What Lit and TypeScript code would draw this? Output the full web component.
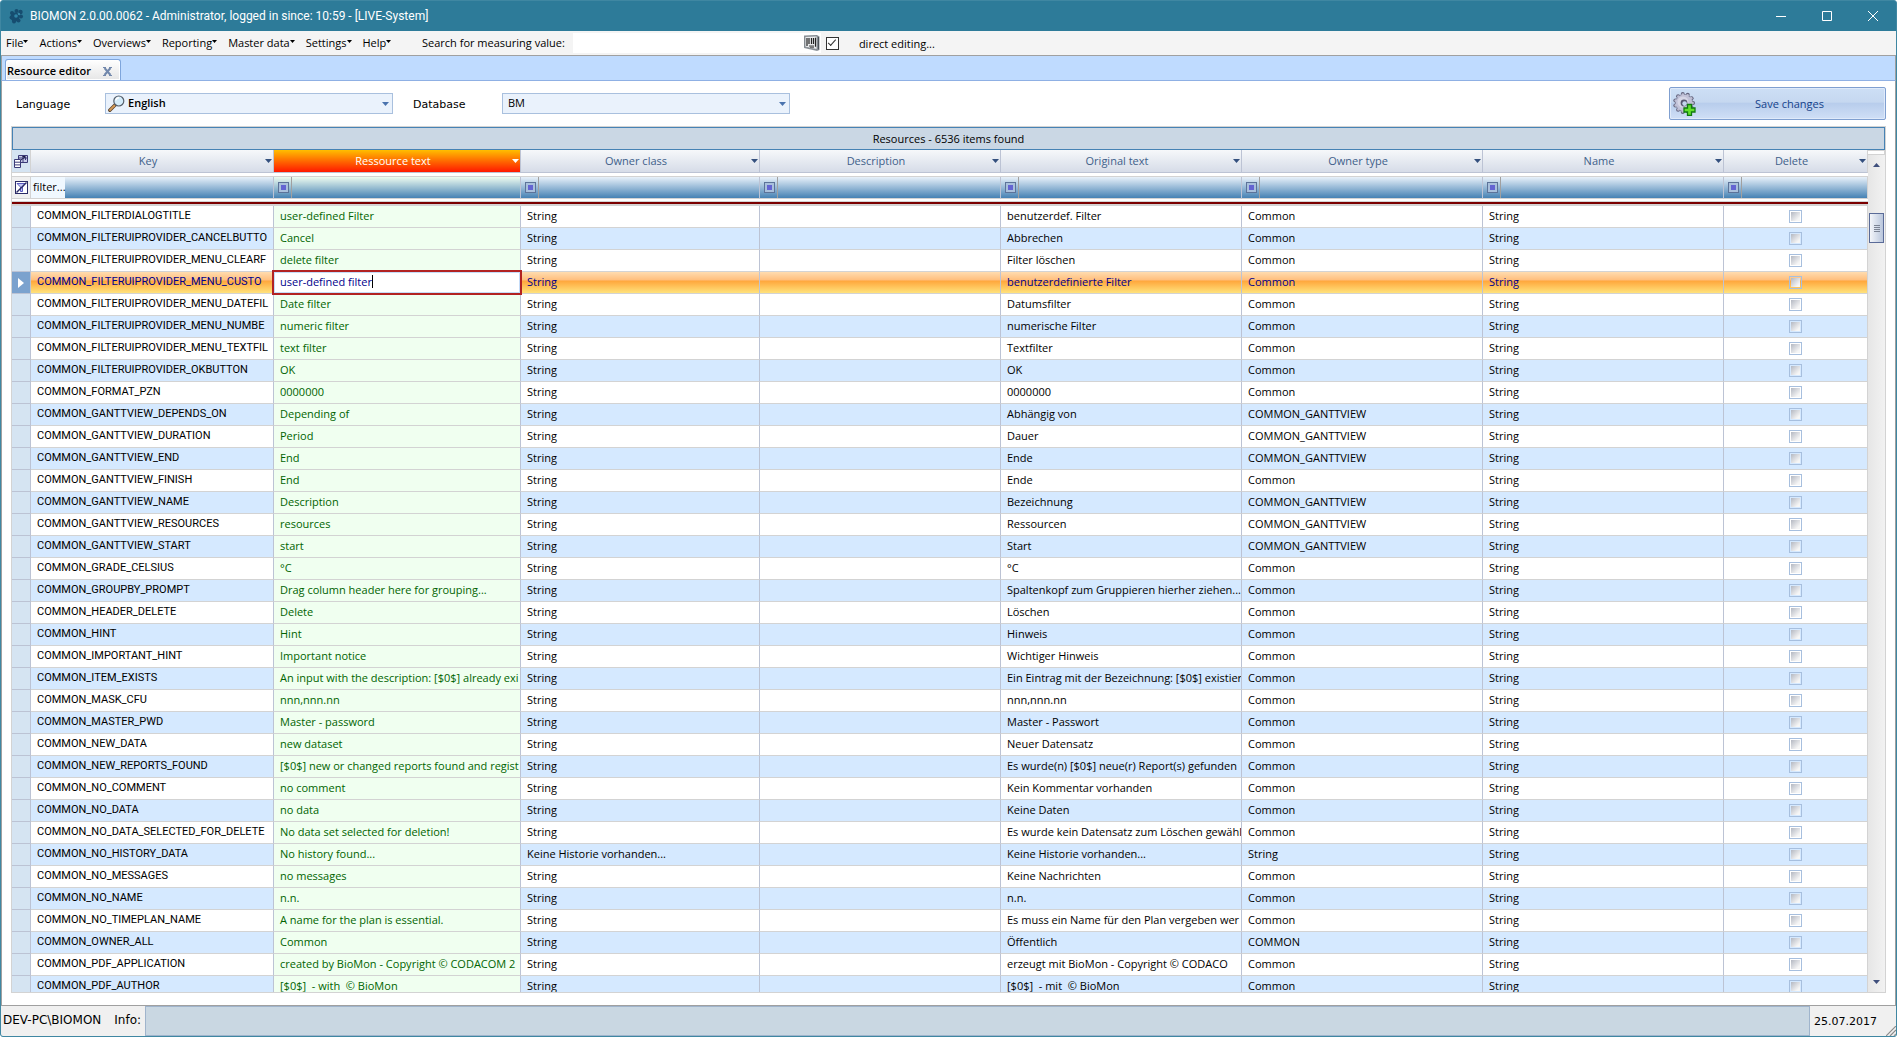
import { LitElement, html, svg, css, nothing } from "lit";
import { customElement, state } from "lit/decorators.js";
import { classMap } from "lit/directives/class-map.js";

interface Resource {
  key: string;
  text: string;
  original: string;
  type: string;
  owner: string;
}

const row = (
  key: string,
  text: string,
  original: string,
  type = "Common",
  owner = "String",
): Resource => ({ key: "COMMON_" + key, text, original, type, owner });

const GANTT = "COMMON_GANTTVIEW";

const RESOURCES: Resource[] = [
  row("FILTERDIALOGTITLE", "user-defined Filter", "benutzerdef. Filter"),
  row("FILTERUIPROVIDER_CANCELBUTTO", "Cancel", "Abbrechen"),
  row("FILTERUIPROVIDER_MENU_CLEARF", "delete filter", "Filter löschen"),
  row("FILTERUIPROVIDER_MENU_CUSTO", "user-defined filter", "benutzerdefinierte Filter"),
  row("FILTERUIPROVIDER_MENU_DATEFIL", "Date filter", "Datumsfilter"),
  row("FILTERUIPROVIDER_MENU_NUMBE", "numeric filter", "numerische Filter"),
  row("FILTERUIPROVIDER_MENU_TEXTFIL", "text filter", "Textfilter"),
  row("FILTERUIPROVIDER_OKBUTTON", "OK", "OK"),
  row("FORMAT_PZN", "0000000", "0000000"),
  row("GANTTVIEW_DEPENDS_ON", "Depending of", "Abhängig von", GANTT),
  row("GANTTVIEW_DURATION", "Period", "Dauer", GANTT),
  row("GANTTVIEW_END", "End", "Ende", GANTT),
  row("GANTTVIEW_FINISH", "End", "Ende"),
  row("GANTTVIEW_NAME", "Description", "Bezeichnung", GANTT),
  row("GANTTVIEW_RESOURCES", "resources", "Ressourcen", GANTT),
  row("GANTTVIEW_START", "start", "Start", GANTT),
  row("GRADE_CELSIUS", "°C", "°C"),
  row("GROUPBY_PROMPT", "Drag column header here for grouping...", "Spaltenkopf zum Gruppieren hierher ziehen..."),
  row("HEADER_DELETE", "Delete", "Löschen"),
  row("HINT", "Hint", "Hinweis"),
  row("IMPORTANT_HINT", "Important notice", "Wichtiger Hinweis"),
  row("ITEM_EXISTS", "An input with the description: [$0$] already exi", "Ein Eintrag mit der Bezeichnung: [$0$] existier"),
  row("MASK_CFU", "nnn,nnn.nn", "nnn,nnn.nn"),
  row("MASTER_PWD", "Master - password", "Master - Passwort"),
  row("NEW_DATA", "new dataset", "Neuer Datensatz"),
  row("NEW_REPORTS_FOUND", "[$0$] new or changed reports found and regist", "Es wurde(n) [$0$] neue(r) Report(s) gefunden"),
  row("NO_COMMENT", "no comment", "Kein Kommentar vorhanden"),
  row("NO_DATA", "no data", "Keine Daten"),
  row("NO_DATA_SELECTED_FOR_DELETE", "No data set selected for deletion!", "Es wurde kein Datensatz zum Löschen gewähl"),
  row("NO_HISTORY_DATA", "No history found...", "Keine Historie vorhanden...", "String", "Keine Historie vorhanden..."),
  row("NO_MESSAGES", "no messages", "Keine Nachrichten"),
  row("NO_NAME", "n.n.", "n.n."),
  row("NO_TIMEPLAN_NAME", "A name for the plan is essential.", "Es muss ein Name für den Plan vergeben wer"),
  row("OWNER_ALL", "Common", "Öffentlich", "COMMON"),
  row("PDF_APPLICATION", "created by BioMon - Copyright © CODACOM 2", "erzeugt mit BioMon - Copyright © CODACO"),
  row("PDF_AUTHOR", "[$0$]  - with  © BioMon", "[$0$]  - mit  © BioMon"),
];

const COLUMNS = ["Key", "Ressource text", "Owner class", "Description", "Original text", "Owner type", "Name", "Delete"];
const MENUS = ["File", "Actions", "Overviews", "Reporting", "Master data", "Settings", "Help"];

const caret = html`<svg class="caret" width="7" height="4" viewBox="0 0 7 4" aria-hidden="true">
  <path d="M0 0h7L3.500 4z" fill="currentColor" /></svg>`;

const gearTeeth = (n: number, r: number, size: number, fill: string) =>
  Array.from({ length: n }, (_, i) => {
    const a = (i * 2 * Math.PI) / n;
    return svg`<circle cx=${12 + r * Math.cos(a)} cy=${11 + r * Math.sin(a)} r=${size} fill=${fill}/>`;
  });

@customElement("resource-grid")
export class ResourceGrid extends LitElement {
  @state() private current = 3;

  static styles = css`
    :host {
      display: flex;
      flex-direction: column;
      min-height: 0;
      border: 1px solid #d3d3d3;
      background: #fff;
      font: 11px/16px "Open Sans", "Noto Sans", sans-serif;
      color: #000;
    }
    button, input { font: inherit; color: inherit; margin: 0; padding: 0; border: 0; background: none; border-radius: 0; }
    svg { display: block; flex: none; }
    .title {
      flex: none;
      border: 1px solid #4682b4;
      background: #cad7e4;
      text-align: center;
      line-height: 21px;
      font-size: 11px;
      font-weight: 400;
      margin: 0;
    }
    .body { flex: 1; display: flex; min-height: 0; }
    .scroller { flex: 1; min-width: 0; overflow: hidden; }
    table { width: 100%; table-layout: fixed; border-collapse: separate; border-spacing: 0; }
    .c-selector { width: 19px; }
    .c-key { width: 243px; }
    .c-text { width: 247px; }
    .c-owner { width: 239px; }
    .c-wide { width: 241px; }
    .c-delete { width: 144px; }
    th, td {
      box-sizing: border-box;
      height: 22px;
      padding: 0;
      border-right: 1px solid #bcc3d4;
      border-bottom: 1px solid #d3d3d3;
      overflow: hidden;
      white-space: nowrap;
      text-align: left;
      font-weight: 400;
    }
    th:last-child, td:last-child { border-right-color: #d3d3d3; }
    .headers th {
      height: 23px;
      background: linear-gradient(#f6f8fa, #d6dce8);
      border-bottom-color: #bcc3d4;
      color: #3f5f8a;
    }
    .headers .corner, .filters .corner { background: #d5e4f2; border-color: #d3d3d3; }
    .filters .corner { background: #f0f0f0; }
    .headers .sorted { background: linear-gradient(#ffbe00, #ff6a00 50%, #ff1800); color: #fff; }
    .head { display: flex; align-items: center; padding-left: 2px; }
    .head span { flex: 1; text-align: center; }
    .head button { width: 10px; height: 16px; display: flex; align-items: center; justify-content: center; color: #34507e; }
    .head .sorted button, .sorted button { color: #fff; }
    .corner button { display: flex; align-items: center; justify-content: center; width: 18px; height: 20px; }
    .gap td { height: 4px; border-right: 0; background: #fff; }
    .filters td { background: linear-gradient(#e8f1fa, #4682b4); height: 22px; }
    .filters .green { background: linear-gradient(#eefcf0, #4682b4); }
    .filter { display: flex; align-items: stretch; height: 21px; }
    .filter label { flex: none; width: 32px; line-height: 20px; padding-left: 2px; background: #f0f8ff; }
    .filter button { flex: none; width: 18px; padding-left: 2px; box-sizing: border-box; display: flex; align-items: center; justify-content: center; border-right: 1px solid #a0a0a0; }
    .filter input { flex: 1; min-width: 0; padding: 0 4px; }
    .fixed td { height: 7px; border-right: 0; border-bottom: 2px solid #d3d3d3; background: linear-gradient(#fff 0 2px, #d3d3d3 2px 3px, #7b0000 3px); }
    .data td { padding: 0 0 2px 6px; background: #fff; }
    .data span { white-space: pre; }
    .data .key { font-family: Roboto, "Open Sans", sans-serif; }
    .data.odd td { background: #d5e9ff; }
    .data td.selector, .data.odd td.selector { background: #d5e4f2; padding: 0; border-bottom-color: #bcc3d4; }
    .data td.text, .data.odd td.text { background: #f0fff0; color: #006400; }
    .data.current td { background: linear-gradient(#ffdcb0, #ffbd7a 40%, #ffa53a 41%, #ffe27c); color: #00008b; }
    .data.current td.selector { background: #7ba2ce; }
    .selector button { display: flex; width: 18px; height: 21px; align-items: center; justify-content: center; }
    .data.current td.text { padding: 0; overflow: visible; background: #fff; }
    .editor {
      position: relative;
      display: flex;
      align-items: center;
      box-sizing: border-box;
      height: 21px;
      padding: 0 6px 2px;
      background: #fff;
      box-shadow: inset 0 0 0 1px #c5dcf8, 0 0 0 2px #b22222;
      color: #00008b;
    }
    .editor input { field-sizing: content; min-width: 1px; max-width: 100%; caret-color: transparent; outline: 0; }
    .bar { flex: none; width: 1px; height: 13px; background: #000; }
    .data td.delete { padding: 0; }
    .delete input {
      appearance: none;
      display: block;
      width: 13px;
      height: 13px;
      margin: 0 auto;
      border: 1px solid #a7bfde;
      background: linear-gradient(135deg, #b4b8c2, #f6f6f6 80%) content-box #fff;
      padding: 1px;
      box-sizing: border-box;
    }
    .delete input:checked { background: #34507e content-box; }
    .scrollbar {
      flex: none;
      width: 17px;
      box-sizing: border-box;
      display: flex;
      flex-direction: column;
      background: linear-gradient(90deg, #e6e6e6, #f2f2f2);
      color: #3f4f7c;
    }
    .split { height: 3px; background: #fff; border: 1px solid #d3d3d3; border-left: 0; }
    .arrow { height: 20px; display: flex; align-items: center; justify-content: center; }
    .track { flex: 1; padding: 38px 1px 0; }
    .thumb {
      height: 30px;
      box-sizing: border-box;
      border: 1px solid #5a6b98;
      background: linear-gradient(90deg, #f4f6fa, #b9c6dc);
      display: flex;
      align-items: center;
      justify-content: center;
    }
  `;

  firstUpdated() {
    const editor = this.renderRoot.querySelector<HTMLInputElement>(".editor input");
    editor?.focus();
    editor?.setSelectionRange(editor.value.length, editor.value.length);
  }

  private filterCell(name: string, i: number) {
    if (i === 0) {
      return html`<td><div class="filter">
        <label for="filter-key">filter...</label><input id="filter-key" />
      </div></td>`;
    }
    return html`<td class=${i === 1 ? "green" : ""}><div class="filter">
      <button aria-label="Filter operator ${name}">
        <svg width="11" height="11" viewBox="0 0 11 11">
          <rect x=".5" y=".5" width="10" height="10" fill="#a9c0dc" stroke="#5c7399" />
          <rect x="3" y="3" width="5" height="5" fill="#6464d2" />
        </svg>
      </button>
      <input aria-label="Filter ${name}" />
    </div></td>`;
  }

  private dataRow(r: Resource, i: number) {
    const current = i === this.current;
    return html`<tr class=${classMap({ data: true, odd: i % 2 === 1, current })}>
      <td class="selector">
        <button aria-label="Select ${r.key}" @click=${() => (this.current = i)}>
          ${current ? html`<svg width="6" height="10" viewBox="0 0 6 10"><path d="M0 0L6 5L0 10z" fill="#fff" /></svg>` : nothing}
        </button>
      </td>
      <td class="key">${r.key}</td>
      <td class="text">${current
        ? html`<div class="editor"><input aria-label="Ressource text" .value=${r.text} /><i class="bar"></i></div>`
        : html`<span>${r.text}</span>`}</td>
      <td>${r.owner}</td>
      <td></td>
      <td><span>${r.original}</span></td>
      <td>${r.type}</td>
      <td>String</td>
      <td class="delete"><input type="checkbox" aria-label="Delete ${r.key}" /></td>
    </tr>`;
  }

  render() {
    return html`
      <h2 class="title">Resources - 6536 items found</h2>
      <div class="body">
        <div class="scroller">
          <table>
            <colgroup>
              <col class="c-selector" /><col class="c-key" /><col class="c-text" /><col class="c-owner" />
              <col /><col class="c-wide" /><col class="c-wide" /><col class="c-wide" /><col class="c-delete" />
            </colgroup>
            <thead>
              <tr class="headers">
                <th class="corner"><button aria-label="Choose columns">
                  <svg width="15" height="15" viewBox="0 0 15 15" fill="#fff" stroke="#3b3b78">
                    <path d="M4.500 1.500h9v7h-9z" fill="#c8cdea" /><path d="M4.500 4h9M9 1.500v7M11.500 3v3" />
                    <path d="M.5 5.500h6v8h-6zM.5 8.200h6M.5 10.900h6" /><path d="M7 6l4-3M8.500 2.500h3" fill="none" stroke="#1c1c48" />
                  </svg>
                </button></th>
                ${COLUMNS.map((c, i) => html`<th scope="col" class=${i === 1 ? "sorted" : ""}>
                  <div class="head"><span>${c}</span><button aria-label="Filter ${c}">${caret}</button></div>
                </th>`)}
              </tr>
              <tr class="gap"><td colspan="9"></td></tr>
              <tr class="filters">
                <td class="corner"><button aria-label="Clear all filters">
                  <svg width="13" height="13" viewBox="0 0 13 13" fill="none" stroke="#2c2c66">
                    <rect x=".5" y=".5" width="12" height="12" fill="#fff" />
                    <path d="M2 2.500h8L7.500 6v4.500h-2V6z" fill="#c4c8f4" stroke="#5a5ac0" />
                    <path d="M1.500 11.500L11.500 1.500" stroke-width="1.500" />
                  </svg>
                </button></td>
                ${COLUMNS.map((c, i) => this.filterCell(c, i))}
              </tr>
              <tr class="fixed"><td colspan="9"></td></tr>
            </thead>
            <tbody>${RESOURCES.map((r, i) => this.dataRow(r, i))}</tbody>
          </table>
        </div>
        <div class="scrollbar">
          <div class="split"></div>
          <button class="arrow" aria-label="Scroll up">
            <svg width="7" height="4" viewBox="0 0 7 4"><path d="M0 4h7L3.500 0z" fill="currentColor" /></svg>
          </button>
          <div class="track"><div class="thumb">
            <svg width="6" height="7" viewBox="0 0 6 7"><path d="M0 .5h6M0 2.500h6M0 4.500h6M0 6.500h6" stroke="#7c8494" /></svg>
          </div></div>
          <button class="arrow" aria-label="Scroll down">${caret}</button>
        </div>
      </div>
    `;
  }
}

@customElement("app-root")
export class AppRoot extends LitElement {
  static styles = css`
    :host {
      display: flex;
      flex-direction: column;
      box-sizing: border-box;
      height: 100vh;
      overflow: hidden;
      background: #2d7b99;
      border: 1px solid #3f87a2;
      border-radius: 3px;
      font: 11px/16px "Open Sans", "Noto Sans", sans-serif;
      color: #000;
    }
    button, input, select { font: inherit; color: inherit; margin: 0; padding: 0; border: 0; background: none; border-radius: 0; }
    svg { display: block; flex: none; }
    .titlebar { flex: none; height: 30px; display: flex; align-items: center; padding-left: 8px; color: #fff; }
    .titlebar h1 { flex: 1; margin: 0; padding-left: 6px; font: 400 12px/16px Roboto, "Open Sans", sans-serif; }
    .titlebar button { width: 46px; height: 28px; display: flex; align-items: center; justify-content: center; }
    .menubar { flex: none; height: 24px; display: flex; align-items: center; background: #f4f4f4; border-bottom: 1px solid #a0a0a0; }
    .menus { display: flex; gap: 11px; padding-left: 5px; width: 421px; box-sizing: border-box; }
    .menus button { display: flex; align-items: center; gap: 0; white-space: nowrap; }
    .menus svg { margin-top: -3px; }
    .search { display: flex; align-items: center; gap: 8px; }
    .searchbox { display: flex; align-items: center; width: 248px; height: 20px; background: #fff; }
    .searchbox input { flex: 1; min-width: 0; height: 20px; padding: 0 4px; outline: 0; }
    .direct { display: flex; align-items: center; gap: 20px; margin-left: 5px; }
    .direct label { padding-top: 2px; }
    .tick {
      appearance: none;
      display: grid;
      place-items: center;
      width: 13px;
      height: 13px;
      box-sizing: border-box;
      border: 1px solid #333;
      background: #fff;
    }
    .direct input:checked::before { content: ""; width: 7px; height: 3px; border: solid #333; border-width: 0 0 1px 1px; transform: rotate(-48deg) translate(1px, -1px); }
    .tabs { flex: none; height: 24px; display: flex; align-items: flex-end; padding-left: 3px; background: #bfdbff; border-bottom: 1px solid #8fb0e4; border-left: 1px solid #a0a0a0; border-right: 1px solid #a0a0a0; }
    .tab {
      display: flex;
      align-items: center;
      gap: 12px;
      height: 21px;
      padding: 2px 8px 0 1px;
      box-sizing: border-box;
      border: 1px solid #7ea5dc;
      border-bottom: 0;
      border-radius: 3px 3px 0 0;
      background: linear-gradient(#fff, #e6e6e6);
      box-shadow: inset 0 0 0 1px #fff;
      font-weight: 600;
    }
    .page { flex: 1; min-height: 0; display: flex; flex-direction: column; padding: 0 9px 12px; background: #fff; border: solid #a0a0a0; border-width: 0 1px 1px; }
    .tools { flex: none; display: flex; align-items: center; height: 45px; }
    .tools label { font: 11px/16px "DejaVu Sans", sans-serif; padding-top: 2px; }
    .language { width: 89px; padding-left: 5px; }
    .database { width: 89px; padding-left: 20px; }
    .combo { display: flex; align-items: center; width: 288px; height: 21px; box-sizing: border-box; padding: 0 3px 0 2px; border: 1px solid #a9c0de; background: #eaf2fc; color: #4a73ae; }
    .combo select { appearance: none; flex: 1; min-width: 0; height: 19px; color: #000; padding: 0 3px 2px; outline: 0; }
    .combo .strong { font-weight: 600; }
    .save {
      margin-left: auto;
      width: 217px;
      height: 33px;
      box-sizing: border-box;
      display: flex;
      align-items: center;
      padding: 0 2px;
      border: 1px solid #7f9fd0;
      border-radius: 2px;
      background: linear-gradient(#cddff5, #c6d8f0 45%, #b8cdec 50%, #cfdff6);
      box-shadow: inset 0 0 0 1px #dfeafa;
      color: #15428b;
    }
    .save span { flex: 1; text-align: center; }
    resource-grid { flex: 1; }
    .status { flex: none; height: 30px; display: flex; background: #f0f0f0; font: 11px/29px "DejaVu Sans", sans-serif; }
    .machine { padding: 0 4px 0 2px; display: flex; gap: 13px; font-size: 12px; }
    .info { flex: 1; background: #c9d7e2; border: 1px solid #9fb4cc; }
    .date { display: flex; align-items: flex-end; width: 86px; padding-left: 4px; box-sizing: border-box; }
    .date time { flex: 1; }
  `;

  render() {
    return html`
      <header class="titlebar">
        <svg width="15" height="16" viewBox="0 0 15 16" fill="#164d70" aria-hidden="true">
          <circle cx="6" cy="9" r="4.500" /><circle cx="3" cy="5" r="2" /><circle cx="7.500" cy="3" r="2" />
          <circle cx="11.500" cy="4" r="2.200" /><circle cx="12" cy="8.500" r="2" /><circle cx="2.500" cy="9.500" r="2" />
          <circle cx="5" cy="13.500" r="2" /><circle cx="9.500" cy="12.500" r="2" />
          <circle cx="7" cy="8" r="1.800" fill="#2f86a8" /><circle cx="10" cy="6" r="1" fill="#3f93b4" />
        </svg>
        <h1>BIOMON 2.0.00.0062 - Administrator, logged in since: 10:59 - [LIVE-System]</h1>
        <button aria-label="Minimize"><svg width="10" height="10" viewBox="0 0 10 10"><path d="M0 5.500h10" stroke="#fff" /></svg></button>
        <button aria-label="Maximize"><svg width="10" height="10" viewBox="0 0 10 10"><path d="M.5.500h9v9h-9z" fill="none" stroke="#fff" /></svg></button>
        <button aria-label="Close"><svg width="10" height="10" viewBox="0 0 10 10"><path d="M0 0L10 10M10 0L0 10" stroke="#fff" /></svg></button>
      </header>

      <div class="menubar">
        <nav class="menus">
          ${MENUS.map((m) => html`<button>${m}<svg width="5" height="3" viewBox="0 0 5 3"><path d="M0 0h5L2.500 3z" /></svg></button>`)}
        </nav>
        <div class="search">
          <label for="search">Search for measuring value:</label>
          <div class="searchbox">
            <input id="search" />
            <svg width="18" height="18" viewBox="0 0 18 18" aria-hidden="true">
              <path d="M1 1.500L14 1l2.500 1.500V16L14 17L1 14z" fill="#8f959b" />
              <path d="M2 2.500L14 2v13.500L2 13z" fill="#e9ebed" stroke="#6c7278" stroke-width=".6" />
              <path d="M4 4v8M6 4v6M8.500 4v6M10.500 4v6M12.500 3.800v9" stroke="#222" stroke-width="1.200" />
              <path d="M6 12h5M7 13.200h4" stroke="#444" />
              <path d="M15.500 3v12.500" stroke="#4c5258" />
            </svg>
          </div>
        </div>
        <div class="direct">
          <input class="tick" id="direct" type="checkbox" checked />
          <label for="direct">direct editing...</label>
        </div>
      </div>

      <div class="tabs">
        <div class="tab">Resource editor
          <button aria-label="Close tab"><svg width="9" height="9" viewBox="0 0 9 9"><path d="M1.500 1l6 7M7.500 1l-6 7" stroke="#7288ac" stroke-width="2" /><path d="M0 .5h3M6 .5h3M0 8.500h3M6 8.500h3" stroke="#7288ac" /></svg></button>
        </div>
      </div>

      <main class="page">
        <div class="tools">
          <label class="language" for="language">Language</label>
          <div class="combo">
            <svg width="17" height="17" viewBox="0 0 17 17" aria-hidden="true">
              <path d="M1.800 15.200L7 10" stroke="#5b4630" stroke-width="3.400" stroke-linecap="round" />
              <path d="M2 15L6.500 10.500" stroke="#d59a56" stroke-width="1.800" stroke-linecap="round" />
              <circle cx="10.800" cy="6" r="5" fill="#d4ecfa" stroke="#56606c" stroke-width="1.200" />
              <path d="M7.800 5.500a3.200 3.200 0 0 1 3.200-2.700" stroke="#fff" stroke-width="1.400" fill="none" />
            </svg>
            <select id="language" class="strong"><option>English</option></select>
            ${caret}
          </div>
          <label class="database" for="database">Database</label>
          <div class="combo">
            <select id="database"><option>BM</option></select>
            ${caret}
          </div>
          <button class="save">
            <svg width="24" height="24" viewBox="0 0 24 24" aria-hidden="true">
              ${gearTeeth(11, 9, 2, "#62627c")}
              <circle cx="12" cy="11" r="9" fill="#77778f" />
              ${gearTeeth(11, 8.6, 1.3, "#bdbdd2")}
              <circle cx="12" cy="11" r="8.300" fill="#c2c2d8" />
              <circle cx="11" cy="10" r="5.500" fill="#d6d6e6" />
              <circle cx="12" cy="11" r="3.400" fill="#565670" />
              <circle cx="12.600" cy="11.600" r="2.300" fill="#c5d6ee" />
              <path d="M15.500 12.500h4v3.500h3.500v4h-3.500v3.500h-4v-3.500h-3.500v-4h3.500z" fill="#62e02c" stroke="#117a11" stroke-width="1.300" />
            </svg>
            <span>Save changes</span>
          </button>
        </div>
        <resource-grid></resource-grid>
      </main>

      <footer class="status">
        <div class="machine"><span>DEV-PC\\BIOMON</span><span>Info:</span></div>
        <div class="info"></div>
        <div class="date"><time datetime="2017-07-25">25.07.2017</time>
          <svg width="10" height="10" viewBox="0 0 10 10" aria-hidden="true"><path d="M0 10L10 0M4 10L10 4M8 10L10 8" stroke="#8c8c8c" stroke-width="1.200" /></svg>
        </div>
      </footer>
    `;
  }
}
